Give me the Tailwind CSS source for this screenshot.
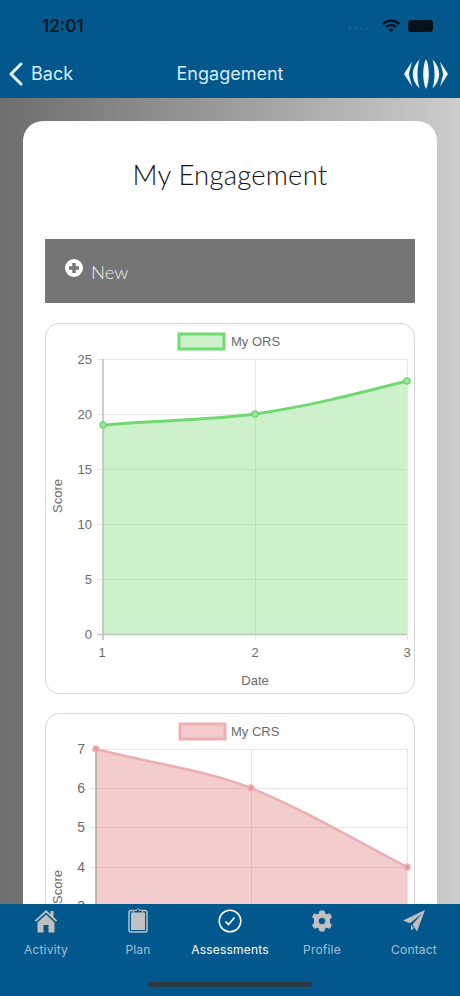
<!DOCTYPE html>
<html lang="en">

<head>
    <meta charset="UTF-8" />
    <meta name="viewport" content="width=device-width, initial-scale=1.0" />
    <title>Engagement</title>
    <script src="https://cdn.jsdelivr.net/npm/@tailwindcss/browser@4"></script>
</head>

<body class="font-['Inter',sans-serif]">
    <div class="flex flex-col w-[460px] h-[996px] overflow-hidden">

        <!-- Status bar and nav -->
        <div class="h-[98px] shrink-0 bg-[#02588c] flex flex-col">
            <div class="h-[53px] flex items-start justify-between pl-[42px] pr-[27px] pt-[13px]">
                <span class="text-[17px] leading-[26px] font-semibold text-[#0b1a26]">12:01</span>
                <div class="flex items-center gap-[7px] h-[26px]">
                    <div class="flex gap-[3px] mr-[5px] mt-[5px]">
                        <div class="w-[3px] h-[3px] rounded-full bg-[#1d5f8a]"></div>
                        <div class="w-[3px] h-[3px] rounded-full bg-[#1d5f8a]"></div>
                        <div class="w-[3px] h-[3px] rounded-full bg-[#1d5f8a]"></div>
                        <div class="w-[3px] h-[3px] rounded-full bg-[#1d5f8a]"></div>
                    </div>
                    <svg width="20" height="14" viewBox="0 0 20 14" fill="#06121c">
                        <path d="M10 3C12.8 3 15.4 4.1 17.3 5.9L18.9 4.2C16.5 1.9 13.4.6 10 .6S3.5 1.900 1.100 4.200L2.700 5.900C4.600 4.100 7.200 3 10 3Z" />
                        <path d="M10 7.300C11.600 7.300 13 7.900 14.200 9L15.800 7.300C14.200 5.800 12.200 5 10 5S5.800 5.800 4.200 7.300L5.800 9C7 7.900 8.400 7.300 10 7.300Z" />
                        <path d="M10 9.500C9 9.500 8.100 9.900 7.400 10.500L10 13.300 12.600 10.500C11.900 9.900 11 9.500 10 9.500Z" />
                    </svg>
                    <div class="w-[25px] h-[12px] rounded-[3px] bg-[#06121c]"></div>
                </div>
            </div>
            <div class="relative flex-1 flex items-center justify-between pl-[9px] pr-[12px] pb-[4px]">
                <div class="flex items-center gap-[8px]">
                    <svg width="14" height="24" viewBox="0 0 14 24" fill="none" stroke="#e4f3fb" stroke-width="3" stroke-linecap="round" stroke-linejoin="round">
                        <path d="M12 2 2 12l10 10" />
                    </svg>
                    <span class="text-[18px] text-[#d5ecf9]">Back</span>
                </div>
                <span class="absolute left-0 right-0 text-center text-[18px] text-[#d5ecf9] pointer-events-none">Engagement</span>
                <svg width="44" height="30" viewBox="0 0 44 30" fill="#eef7fc">
                    <path d="M22 0C20 4 19.200 9.500 19.200 15S20 26 22 30C24 26 24.800 20.500 24.800 15S24 4 22 0Z" />
                    <path d="M15.500 .5C11 5 8.800 10 8.800 15S11 25 15.500 29.500C14 24.500 13.500 19.800 13.500 15S14 5.500 15.500 .5Z" />
                    <path d="M28.500 .5C33 5 35.200 10 35.200 15S33 25 28.500 29.500C30 24.500 30.500 19.800 30.500 15S30 5.500 28.500 .5Z" />
                    <path d="M8 2.500 0 15 8 27.500 4.800 15Z" />
                    <path d="M36 2.500 44 15 36 27.500 39.200 15Z" />
                </svg>
            </div>
        </div>

        <!-- Scroll area -->
        <div class="flex-1 min-h-0 overflow-hidden bg-gradient-to-r from-[#6e6e6e] to-[#cdcdcd] px-[23px] pt-[23px]">
            <div class="bg-white rounded-t-[20px] px-[22px] pt-[31px] pb-6">
                <h1 class="text-center text-[27.500px] leading-[46px] font-['Lato',sans-serif] font-light text-[#111] tracking-[0.2px]">My Engagement</h1>

                <button class="mt-[41px] w-full h-[64px] bg-[#757575] flex items-center pl-[20px] gap-[8px] text-white">
                    <svg width="18" height="18" viewBox="0 0 18 18" class="-mt-[6px]">
                        <circle cx="9" cy="9" r="9" fill="#fff" />
                        <path d="M9 4v10M4 9h10" stroke="#757575" stroke-width="3.400" />
                    </svg>
                    <span class="text-[18.500px] font-['Lato',sans-serif] font-light text-[#eee] mt-[3px]">New</span>
                </button>

                <!-- ORS chart -->
                <div class="mt-[20px] h-[371px] border border-[#d6d6d6] rounded-[14px]">
                    <svg width="368" height="369" viewBox="46 324 368 369" class="font-['Liberation_Sans',sans-serif]">
                        <rect x="179" y="334" width="45" height="15" fill="#cdf1cb" stroke="#6fdc70" stroke-width="3" />
                        <text x="231" y="346" font-size="13" fill="#6b6b6b">My ORS</text>

                        <g stroke="#e6e6e6" stroke-width="1">
                            <path d="M97 359.500H407M97 414.500H407M97 469.500H407M97 524.500H407M97 579.500H407" />
                            <path d="M255.500 359V640M407.500 359V640" />
                        </g>
                        <path d="M103 425C150 421 210 420 255 414C310 406 360 393 407 381V634H103Z" fill="#cdf1cb" />
                        <path d="M103 469.500H407M103 524.500H407M103 579.500H407M255.500 414V634" stroke="#bcdcbc" stroke-opacity="0.7" />
                        <path d="M97 634.500H407" stroke="#b5c9b3" stroke-width="1.500" />
                        <path d="M103 359V640" stroke="#bdbdbd" stroke-width="1.500" />
                        <path d="M103 425C150 421 210 420 255 414C310 406 360 393 407 381" fill="none" stroke="#70d971" stroke-width="3" />
                        <g fill="#a3e4a2" stroke="#70d971" stroke-width="1.500">
                            <circle cx="103" cy="425" r="3" />
                            <circle cx="255" cy="414" r="3" />
                            <circle cx="407" cy="381" r="3" />
                        </g>

                        <g font-size="13" fill="#6b6b6b" text-anchor="end">
                            <text x="92" y="364">25</text>
                            <text x="92" y="419">20</text>
                            <text x="92" y="474">15</text>
                            <text x="92" y="529">10</text>
                            <text x="92" y="584">5</text>
                            <text x="92" y="639">0</text>
                        </g>
                        <g font-size="13" fill="#6b6b6b" text-anchor="middle">
                            <text x="102" y="657">1</text>
                            <text x="255" y="657">2</text>
                            <text x="407" y="657">3</text>
                            <text x="255" y="685">Date</text>
                            <text transform="translate(62 496) rotate(-90)">Score</text>
                        </g>
                    </svg>
                </div>

                <!-- CRS chart -->
                <div class="mt-[19px] h-[371px] border border-[#d6d6d6] rounded-[14px]">
                    <svg width="368" height="369" viewBox="46 714 368 369" class="font-['Liberation_Sans',sans-serif]">
                        <rect x="180" y="724" width="45" height="15" fill="#f3cccd" stroke="#eeb0b3" stroke-width="3" />
                        <text x="231" y="736" font-size="13" fill="#6b6b6b">My CRS</text>

                        <g stroke="#e6e6e6" stroke-width="1">
                            <path d="M90 749.500H407M90 788.500H407M90 827.500H407M90 867.500H407" />
                            <path d="M251.500 749V1000M407.500 749V1000" />
                        </g>
                        <path d="M96 749C150 763 205 770 251 788C305 810 355 840 407 867V1000H96Z" fill="#f3cccd" />
                        <path d="M96 788.500H251M96 827.500H330M96 867.500H407M251.500 788V1000" stroke="#d8b4b5" stroke-opacity="0.7" />
                        <path d="M96 749V1000" stroke="#b9a3a4" stroke-width="1.500" />
                        <path d="M96 749C150 763 205 770 251 788C305 810 355 840 407 867" fill="none" stroke="#e8b0b3" stroke-width="2.500" />
                        <g fill="#e49aa0" stroke="#f0b5b8" stroke-width="1.500">
                            <circle cx="96" cy="749" r="3" />
                            <circle cx="251" cy="788" r="3" />
                            <circle cx="407" cy="867" r="3" />
                        </g>

                        <g font-size="14" fill="#6b6b6b" text-anchor="end">
                            <text x="85" y="754">7</text>
                            <text x="85" y="793">6</text>
                            <text x="85" y="832">5</text>
                            <text x="85" y="872">4</text>
                            <text x="85" y="911">3</text>
                        </g>
                        <text transform="translate(62 887) rotate(-90)" font-size="13" fill="#6b6b6b" text-anchor="middle">Score</text>
                    </svg>
                </div>
            </div>
        </div>

        <!-- Tab bar -->
        <div class="relative h-[92px] shrink-0 bg-[#02588c] grid grid-cols-5 text-[12px] tracking-[0.2px] text-[#a3c0d3]">
            <div class="flex flex-col items-center pt-[5px]">
                <svg width="24" height="24" viewBox="0 0 24 24" fill="#c0c0c0">
                    <path d="M12 1 0.800 11.500 2 12.800 12 3.500 22 12.800 23.200 11.500 19.500 8V2H16.500V5.200Z" />
                    <path d="M12 5.500 3.500 13.500V23.500H9.500V16H14.500V23.500H20.500V13.500Z" />
                </svg>
                <span class="mt-[8px]">Activity</span>
            </div>
            <div class="flex flex-col items-center pt-[4px]">
                <svg width="20" height="25" viewBox="0 0 20 25">
                    <rect x="1" y="2.500" width="18" height="21.500" rx="2" fill="none" stroke="#b4c3cd" stroke-width="1.500" />
                    <rect x="3" y="4.500" width="14" height="17.500" fill="#c0c0c0" />
                    <path d="M5.500 5V2.500H8.500C8.700 .5 11.300 .5 11.500 2.500H14.500V5Z" fill="#02588c" stroke="#c0c0c0" stroke-width="1" />
                </svg>
                <span class="mt-[8px]">Plan</span>
            </div>
            <div class="flex flex-col items-center pt-[5px] text-white">
                <svg width="24" height="24" viewBox="0 0 24 24" fill="none" stroke="#fff">
                    <circle cx="12" cy="12" r="10.800" stroke-width="1.500" />
                    <path d="M7.500 12.500 10.500 15.500 16.500 8.500" stroke-width="1.600" />
                </svg>
                <span class="mt-[8px]">Assessments</span>
            </div>
            <div class="flex flex-col items-center pt-[5px]">
                <svg width="24" height="24" viewBox="0 0 24 24">
                    <path fill="#c0c0c0" stroke="#c0c0c0" stroke-linejoin="round" fill-rule="evenodd" d="M10 2H14L14.800 4.800 16.900 5.800 19.500 4.700 21.500 8 19.500 10V14L21.500 16 19.500 19.300 16.900 18.200 14.800 19.200 14 22H10L9.200 19.200 7.100 18.200 4.500 19.300 2.500 16 4.500 14V10L2.500 8 4.500 4.700 7.100 5.800 9.200 4.800ZM12 8.200A3.800 3.800 0 1 0 12 15.800 3.800 3.800 0 1 0 12 8.200Z" />
                </svg>
                <span class="mt-[8px]">Profile</span>
            </div>
            <div class="flex flex-col items-center pt-[5px]">
                <svg width="24" height="24" viewBox="0 0 24 24" fill="#c0c0c0">
                    <path d="M23 1 1 11.500 8 14.300 20 4.500 10.500 15.500 15 22.500Z" />
                    <path d="M9 16V21.500L12 19Z" />
                </svg>
                <span class="mt-[8px]">Contact</span>
            </div>
            <div class="absolute left-[148px] bottom-[9px] w-[164px] h-[5px] rounded-full bg-[#2c3a44]"></div>
        </div>
    </div>
</body>

</html>
